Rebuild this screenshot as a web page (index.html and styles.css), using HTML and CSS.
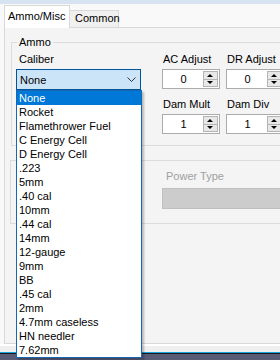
FILE: index.html
```html
<!DOCTYPE html>
<html>
<head>
<meta charset="utf-8">
<link rel="stylesheet" href="styles.css">
</head>
<body>
<div class="window">
  <div class="topstrip"></div>
  <div class="tabstrip">
    <div class="tab active">Ammo/Misc</div>
    <div class="tab">Common</div>
  </div>
  <div class="panel">
    <div class="group g1">
      <span class="legend">Ammo</span>
      <div class="g1-body">
        <div class="caliber">
          <div class="label">Caliber</div>
          <div class="combo focused">
            <span>None</span>
            <svg class="chev" width="9" height="5" viewBox="0 0 9 5"><path d="M0.5 0.5 L4.5 4.5 L8.5 0.5" fill="none" stroke="#333" stroke-width="1"/></svg>
          </div>
        </div>
        <div class="nums">
          <div class="field">
            <div class="label">AC Adjust</div>
            <div class="num"><span class="val">0</span><span class="spin"><span class="sb up"></span><span class="sb down"></span></span></div>
          </div>
          <div class="field">
            <div class="label">DR Adjust</div>
            <div class="num"><span class="val">0</span><span class="spin"><span class="sb up"></span><span class="sb down"></span></span></div>
          </div>
          <div class="field">
            <div class="label">Dam Mult</div>
            <div class="num"><span class="val">1</span><span class="spin"><span class="sb up"></span><span class="sb down"></span></span></div>
          </div>
          <div class="field">
            <div class="label">Dam Div</div>
            <div class="num"><span class="val">1</span><span class="spin"><span class="sb up"></span><span class="sb down"></span></span></div>
          </div>
        </div>
      </div>
    </div>
    <div class="group g2">
      <div class="g2-body">
        <div class="label disabled">Power Type</div>
        <div class="combo disabled-combo">
          <span></span>
          <svg class="chev" width="9" height="5" viewBox="0 0 9 5"><path d="M0.5 0.5 L4.5 4.5 L8.5 0.5" fill="none" stroke="#a8a8a8" stroke-width="1"/></svg>
        </div>
      </div>
    </div>
  </div>
  <div class="formfoot"></div>
  <div class="taskline"></div>
  <div class="taskbar"></div>

  <ul class="dropdown">
    <li class="sel">None</li>
    <li>Rocket</li>
    <li>Flamethrower Fuel</li>
    <li>C Energy Cell</li>
    <li>D Energy Cell</li>
    <li>.223</li>
    <li>5mm</li>
    <li>.40 cal</li>
    <li>10mm</li>
    <li>.44 cal</li>
    <li>14mm</li>
    <li>12-gauge</li>
    <li>9mm</li>
    <li>BB</li>
    <li>.45 cal</li>
    <li>2mm</li>
    <li>4.7mm caseless</li>
    <li>HN needler</li>
    <li>7.62mm</li>
  </ul>
</div>
</body>
</html>
```
FILE: styles.css
```css
* { box-sizing: border-box; }
html, body { margin: 0; padding: 0; }
body {
  font-family: "Liberation Sans", Arial, sans-serif;
  font-size: 11px;
  line-height: 13px;
  color: #000;
  background: #f0f0f0;
}
.window {
  position: relative;
  width: 280px;
  height: 360px;
  overflow: hidden;
  background: #f9f9f9;
}
.topstrip {
  height: 4px;
  background: #d7e3f0;
}
.tabstrip {
  height: 23px;
  display: flex;
  align-items: flex-end;
  padding-left: 4px;
}
.tab {
  border: 1px solid #d9d9d9;
  border-bottom: none;
  background: #f0f0f0;
  height: 17px;
  width: 49px;
  padding: 1px 0 0 5px;
  border-left: none;
}
.tab.active {
  background: #fff;
  height: 23px;
  width: 66px;
  padding: 4px 0 0 3px;
  border-left: 1px solid #d9d9d9;
  margin-bottom: -1px;
  position: relative;
  z-index: 1;
}
.panel {
  margin-left: 4px;
  width: 300px;
  height: 317px;
  border: 1px solid #d9d9d9;
  border-right: none;
  background: #f4f4f4;
}
.group {
  margin-left: 6px;
  border: 1px solid #dcdcdc;
  border-right: none;
}
.g1 {
  margin-top: 14px;
  height: 104px;
}
.legend {
  display: block;
  width: max-content;
  margin: -7px 0 -6px 5px;
  padding: 0 2px;
  background: #f4f4f4;
}
.g1-body {
  display: flex;
  padding: 10px 0 0 4px;
  gap: 21px;
}
.caliber .label {
  padding-left: 3px;
  margin-bottom: 3px;
}
.combo {
  position: relative;
  display: flex;
  align-items: center;
  justify-content: space-between;
  height: 21px;
  border: 1px solid #7a7a7a;
  background: #fff;
}
.combo.focused {
  width: 125px;
  border-color: #005499;
  background: #cce4f7;
  padding: 0 4px 0 3px;
}
.combo span { padding-top: 1px; }
.chev { display: block; }
.nums {
  display: grid;
  grid-template-columns: 58px 58px;
  column-gap: 6px;
  row-gap: 9px;
}
.field .label {
  padding-left: 1px;
  margin-bottom: 3px;
}
.num {
  display: flex;
  height: 20px;
  border: 1px solid #ababab;
  background: #fff;
  padding: 1px;
}
.val {
  flex: 1;
  text-align: center;
  line-height: 17px;
}
.spin {
  width: 15px;
  display: flex;
  flex-direction: column;
}
.sb {
  flex: 1;
  background: #e8e8e8;
  border: 1px solid #b4b4b4;
  position: relative;
}
.sb.down { border-top: none; }
.sb::after {
  content: "";
  position: absolute;
  left: 3px;
  width: 0;
  height: 0;
  border-left: 3.5px solid transparent;
  border-right: 3.5px solid transparent;
}
.sb.up::after {
  top: 2px;
  border-bottom: 3px solid #000;
}
.sb.down::after {
  top: 1px;
  border-top: 3px solid #000;
}
.g2 {
  margin-top: 14px;
  height: 64px;
  margin-left: 5px;
}
.g2-body {
  padding: 9px 0 0 151px;
}
.label.disabled {
  color: #a0a0a0;
  padding-left: 4px;
  margin-bottom: 5px;
}
.disabled-combo {
  width: 140px;
  background: #cccccc;
  border-color: #bfbfbf;
  padding: 0 4px 0 3px;
}
.formfoot {
  height: 8px;
  border-top: 2px solid #fff;
  background: #f0f0f0;
}
.taskline {
  height: 1px;
  background: #1ba1e2;
}
.taskbar {
  height: 10px;
  border-top: 1px solid #1a1a1a;
  background: #575b76;
}
.dropdown {
  position: absolute;
  left: 16px;
  top: 90px;
  width: 126px;
  margin: 0;
  padding: 0;
  list-style: none;
  background: #fff;
  border: 1px solid #1667b4;
  box-shadow: 2px 2px 2px rgba(0, 0, 0, 0.25);
  z-index: 5;
}
.dropdown li {
  height: 14px;
  line-height: 14px;
  padding-left: 2px;
  white-space: nowrap;
}
.dropdown li.sel {
  background: #0078d7;
  color: #fff;
}
```
